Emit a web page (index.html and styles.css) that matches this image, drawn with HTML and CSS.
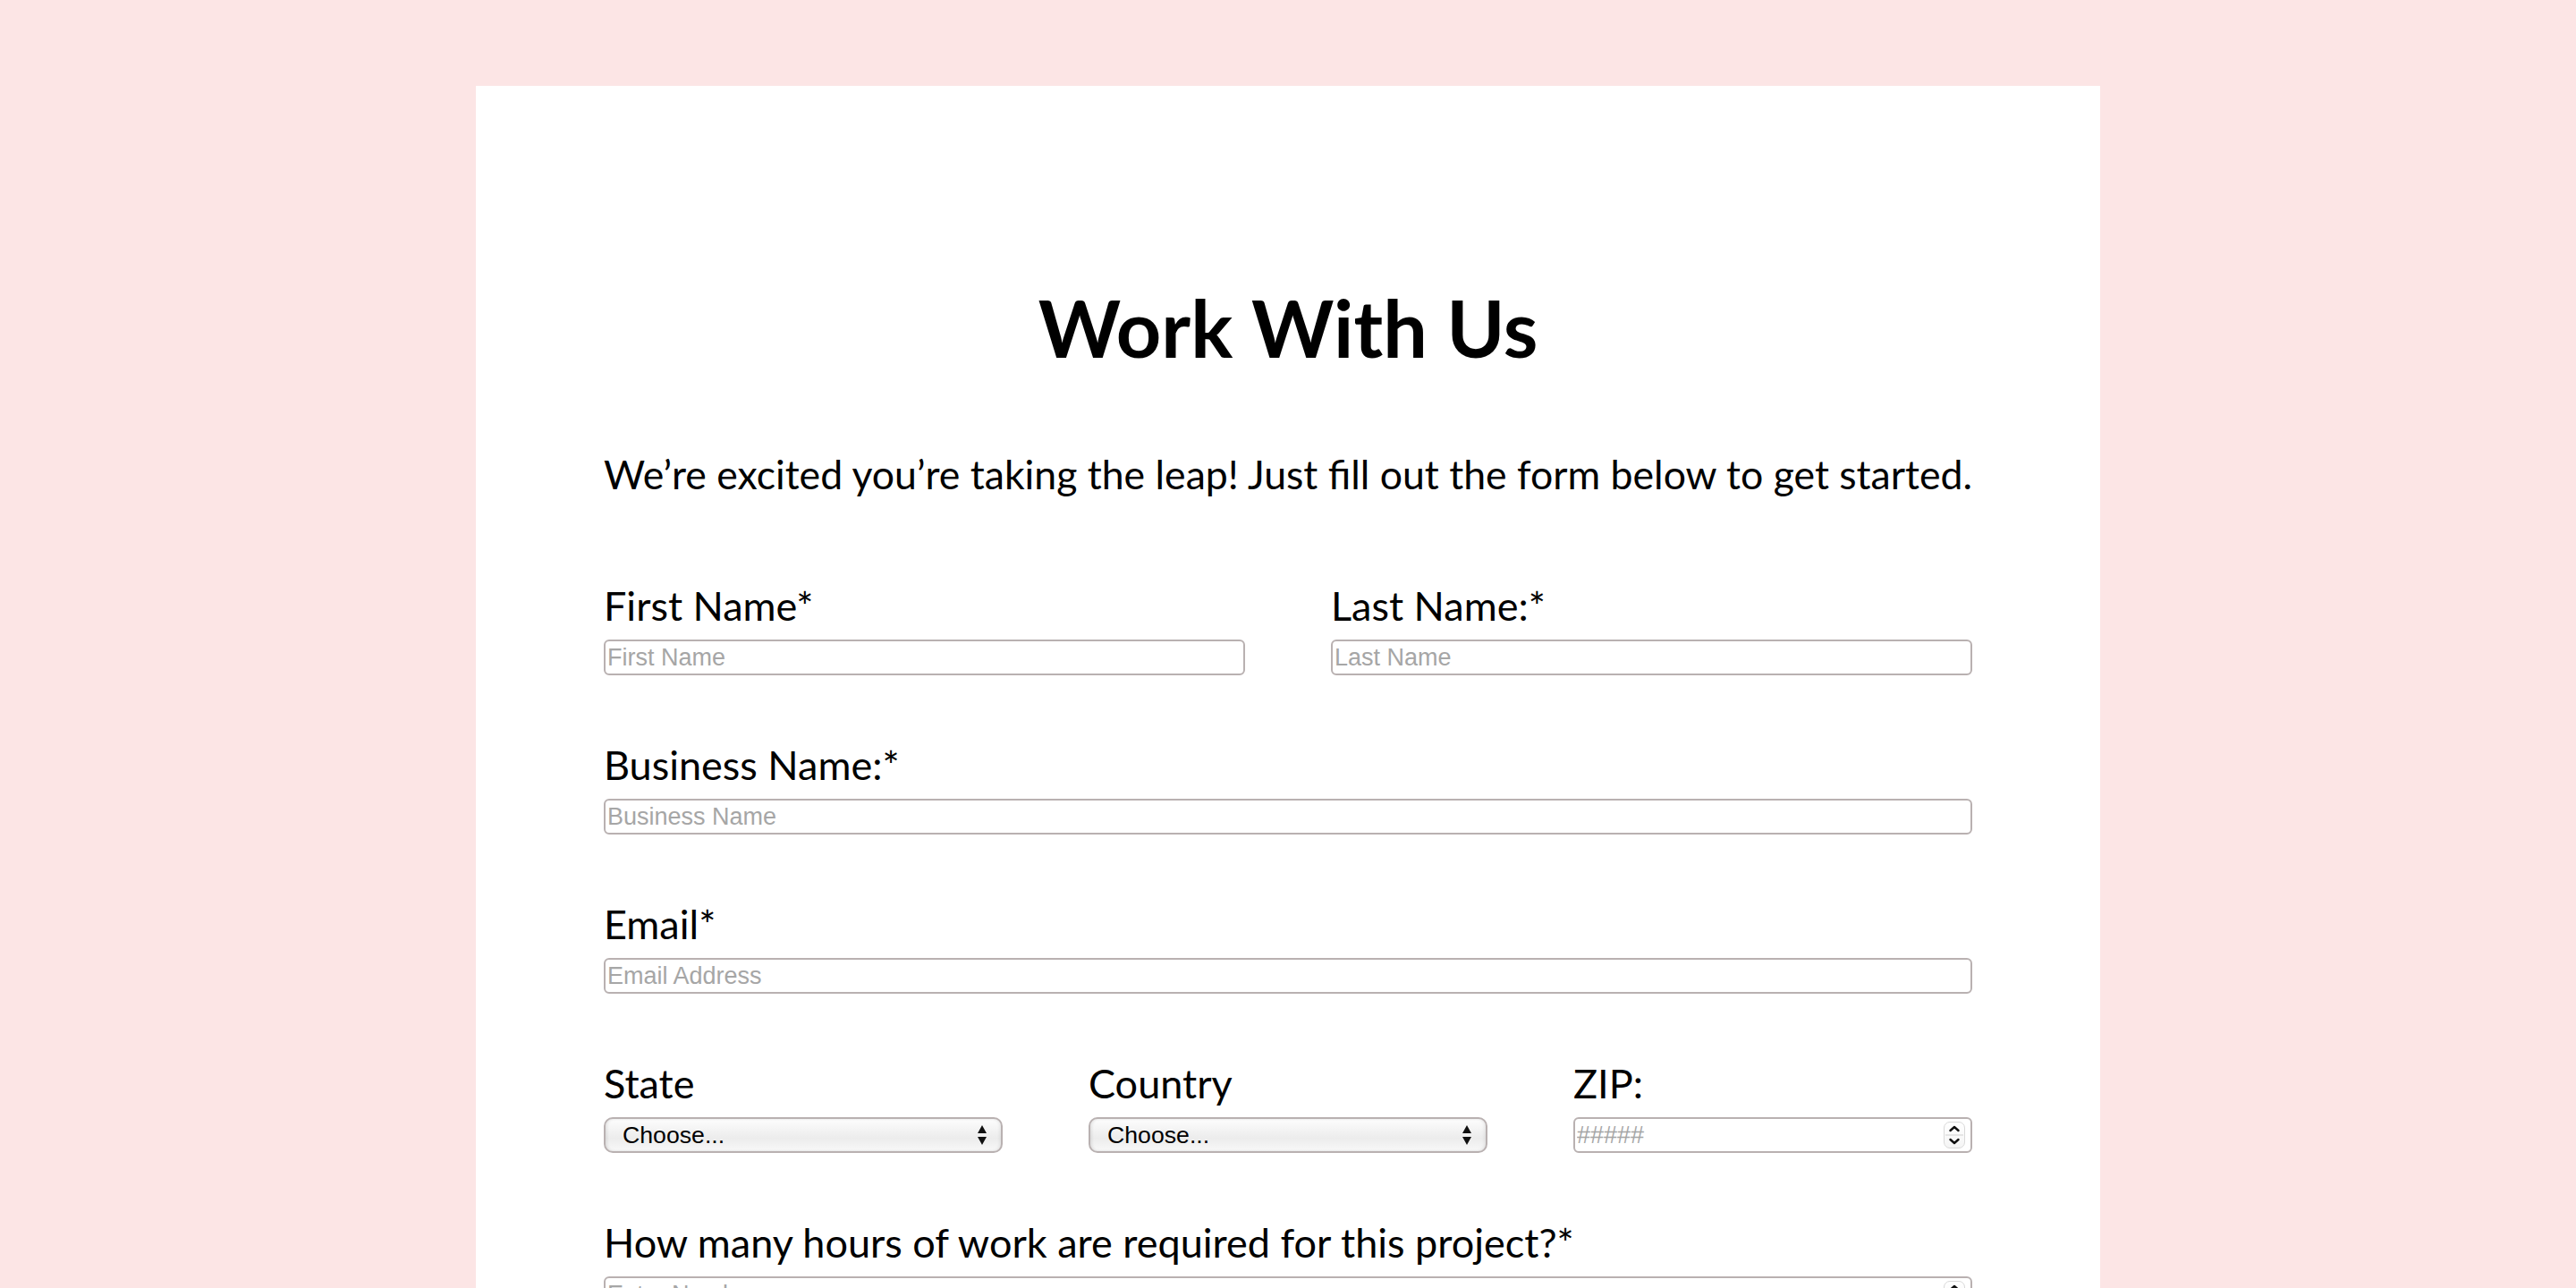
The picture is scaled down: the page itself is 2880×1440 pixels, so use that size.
FILE: index.html
```html
<!DOCTYPE html>
<html lang="en">
<head>
<meta charset="utf-8">
<title>Work With Us</title>
<link rel="stylesheet" href="styles.css">
</head>
<body>
<main class="card">
  <h1 class="title">Work With Us</h1>
  <p class="intro">We’re excited you’re taking the leap! Just fill out the form below to get started.</p>
  <form class="form">
    <div class="row cols-2">
      <div class="field">
        <label class="label" for="fn">First Name*</label>
        <input class="input" id="fn" type="text" placeholder="First Name">
      </div>
      <div class="field">
        <label class="label" for="ln">Last Name:*</label>
        <input class="input" id="ln" type="text" placeholder="Last Name">
      </div>
    </div>
    <div class="row">
      <div class="field">
        <label class="label" for="bn">Business Name:*</label>
        <input class="input" id="bn" type="text" placeholder="Business Name">
      </div>
    </div>
    <div class="row">
      <div class="field">
        <label class="label" for="em">Email*</label>
        <input class="input" id="em" type="email" placeholder="Email Address">
      </div>
    </div>
    <div class="row cols-3">
      <div class="field">
        <label class="label" for="st">State</label>
        <div class="select-wrap">
          <select class="select" id="st"><option>Choose...</option></select>
          <svg class="select-arrows" width="12" height="24" viewBox="0 0 12 24"><path d="M6 1 L11 10 H1 Z M1 14 H11 L6 23 Z" fill="#111"/></svg>
        </div>
      </div>
      <div class="field">
        <label class="label" for="co">Country</label>
        <div class="select-wrap">
          <select class="select" id="co"><option>Choose...</option></select>
          <svg class="select-arrows" width="12" height="24" viewBox="0 0 12 24"><path d="M6 1 L11 10 H1 Z M1 14 H11 L6 23 Z" fill="#111"/></svg>
        </div>
      </div>
      <div class="field">
        <label class="label" for="zip">ZIP:</label>
        <div class="numfield">
          <input class="num-input" id="zip" type="text" inputmode="numeric" placeholder="#####">
          <span class="spin">
            <svg width="24" height="30" viewBox="0 0 24 30"><path d="M7.5 10 L12 6 L16.5 10 M7.5 20 L12 24 L16.5 20" fill="none" stroke="#111" stroke-width="2.4" stroke-linecap="round" stroke-linejoin="round"/><path d="M2 15 H22" stroke="#dedede" stroke-width="1.5"/></svg>
          </span>
        </div>
      </div>
    </div>
    <div class="row">
      <div class="field">
        <label class="label" for="hr">How many hours of work are required for this project?*</label>
        <div class="numfield">
          <input class="num-input" id="hr" type="text" inputmode="numeric" placeholder="Enter Number">
          <span class="spin">
            <svg width="24" height="30" viewBox="0 0 24 30"><path d="M7.5 10 L12 6 L16.5 10 M7.5 20 L12 24 L16.5 20" fill="none" stroke="#111" stroke-width="2.4" stroke-linecap="round" stroke-linejoin="round"/><path d="M2 15 H22" stroke="#dedede" stroke-width="1.5"/></svg>
          </span>
        </div>
      </div>
    </div>
  </form>
</main>
</body>
</html>
```

FILE: styles.css
```css
* { box-sizing: border-box; }

html, body {
  margin: 0;
  padding: 0;
}

body {
  background: #fce5e5;
  font-family: Lato, "Noto Sans", sans-serif;
  color: #000;
}

.card {
  width: 1816px;
  margin: 96px auto 0;
  background: #fff;
  padding: 226px 143px 200px;
  min-height: 1400px;
}

.title {
  margin: 0;
  font-size: 88px;
  line-height: 88px;
  font-weight: 700;
  text-align: center;
}

.intro {
  margin: 97px 0 0;
  font-size: 44.6px;
  line-height: 45px;
  white-space: nowrap;
  text-align: center;
}

.form {
  margin-top: 103px;
  display: flex;
  flex-direction: column;
  gap: 78px;
}

.row {
  display: grid;
  grid-template-columns: 1fr;
  column-gap: 96px;
}

.row.cols-2 { grid-template-columns: 1fr 1fr; }
.row.cols-3 { grid-template-columns: 1fr 1fr 1fr; }

.field {
  display: flex;
  flex-direction: column;
  min-width: 0;
}

.label {
  display: block;
  font-size: 45px;
  line-height: 45px;
  margin-bottom: 15px;
}

.input,
.numfield {
  height: 40px;
  border: 2px solid #b9b1b1;
  border-radius: 6px;
  background: #fff;
}

.input {
  width: 100%;
  padding: 0 2px;
  font-family: "Liberation Sans", Arial, sans-serif;
  font-size: 27px;
  color: #000;
  outline: none;
}

.input::placeholder,
.num-input::placeholder {
  color: #a6a6a6;
}

.numfield {
  display: flex;
  align-items: center;
  padding: 0 6px 0 2px;
}

.num-input {
  flex: 1;
  min-width: 0;
  height: 100%;
  border: 0;
  padding: 0;
  outline: none;
  background: transparent;
  font-family: "Liberation Sans", Arial, sans-serif;
  font-size: 27px;
}

.spin {
  display: flex;
  width: 24px;
  height: 30px;
  border: 1px solid #d9d9d9;
  border-radius: 7px;
  background: linear-gradient(#ffffff, #f5f5f5);
}

.spin svg { display: block; margin: -1px; }

.select-wrap {
  position: relative;
  height: 40px;
}

.select {
  appearance: none;
  -webkit-appearance: none;
  width: 100%;
  height: 40px;
  border: 2px solid #b9b1b1;
  border-radius: 10px;
  padding: 0 40px 0 19px;
  font-family: "Liberation Sans", Arial, sans-serif;
  font-size: 26.67px;
  color: #000;
  background: linear-gradient(#fdfdfd 0%, #f0f0f0 45%, #ececec 60%, #f8f8f8 100%);
  box-shadow: inset 2px 0 3px rgba(0,0,0,0.08), inset -2px 0 3px rgba(0,0,0,0.06);
  outline: none;
}

.select-arrows {
  position: absolute;
  right: 17px;
  top: 8px;
  pointer-events: none;
}
```
